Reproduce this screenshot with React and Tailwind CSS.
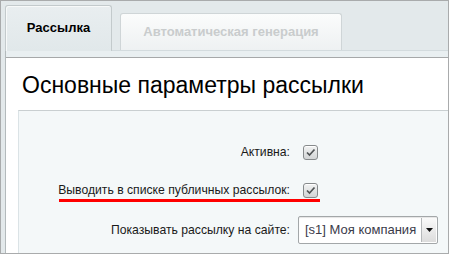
import { useState } from 'react'

function Checkbox({ checked }) {
  return (
    <span className="ml-[5px] flex h-[15px] w-[15px] items-center justify-center rounded-[3px] border border-[#868a8c] bg-gradient-to-b from-[#f2f3f3] to-[#d2d5d6] shadow-[inset_0_1px_0_#fff]">
      {checked && (
        <svg width="11" height="11" viewBox="0 0 11 11">
          <path d="M2 5.5 L4.5 8 L9.5 2.5" fill="none" stroke="#505456" strokeWidth="1.7" />
        </svg>
      )}
    </span>
  )
}

export default function App() {
  const [active, setActive] = useState(true)
  const [isPublic, setIsPublic] = useState(true)

  return (
    <div className="h-[255px] w-[450px] bg-white font-['Liberation_Sans',Arial,sans-serif]">
      <div className="flex h-[254px] w-[449px] flex-col overflow-hidden border border-[#a9abac] bg-[#e3e9eb]">
        <div className="flex h-[49px] shrink-0 items-end gap-[8px] pl-[4px]">
          <div className="relative z-10 -mb-px flex h-[46px] w-[107px] items-center justify-center rounded-t-[3px] border border-b-0 border-[#c3cacc] bg-gradient-to-b from-[#e9eef0] to-[#e1e8ea] pb-px text-[13px] font-bold text-black shadow-[inset_1px_1px_0_#f7f9f9]">
            Рассылка
          </div>
          <div className="flex h-[37px] w-[222px] items-center justify-center rounded-t-[3px] border border-b-0 border-[#cfd5d7] bg-gradient-to-b from-[#fbfcfc] to-[#eef1f2] text-[13px] font-bold text-[#c9cccd]">
            Автоматическая генерация
          </div>
        </div>

        <div className="ml-[4px] flex flex-1 flex-col border-l border-[#b3babc] bg-white">
          <div className="h-[8px] shrink-0 border-t border-b border-t-[#d3dbde] border-b-[#a6a8a9] bg-[#e9eff1]" />
          <div className="h-[52px] shrink-0 pl-[16px] pt-[14px] text-[23px] leading-[26px] text-black">
            Основные параметры рассылки
          </div>
          <div className="relative ml-[12px] flex-1 border-t border-l border-t-[#c9cfd1] border-l-[#dbe3e6] bg-[#f4f8f9] pt-[22px] text-[12.2px] text-[#1a1a1a]">
            <div className="flex h-[38px] items-center">
              <div className="w-[271px] text-right">Активна:</div>
              <button className="pl-[8px]" onClick={() => setActive(!active)}>
                <Checkbox checked={active} />
              </button>
            </div>
            <div className="relative flex h-[38px] items-center">
              <div className="w-[271px] text-right">Выводить в списке публичных рассылок:</div>
              <button className="pl-[8px]" onClick={() => setIsPublic(!isPublic)}>
                <Checkbox checked={isPublic} />
              </button>
              <div className="absolute left-[40px] top-[28px] h-[3px] w-[261px] bg-[#ff0000]" />
            </div>
            <div className="flex h-[42px] items-center">
              <div className="w-[271px] text-right">Показывать рассылку на сайте:</div>
              <div className="pl-[8px]">
                <div className="flex h-[28px] w-[140px] items-stretch rounded-[2px] border border-[#a3a7a9] bg-white shadow-[inset_0_1px_1px_#e5e5e5]">
                  <div className="flex flex-1 items-center pl-[6px] text-[13px] text-[#3b3b4a]">[s1] Моя компания</div>
                  <div className="m-[1px] flex w-[15px] items-center justify-center border-l border-[#b5b8ba] bg-gradient-to-b from-[#fafafa] to-[#dcdcdc]">
                    <svg width="7" height="4" viewBox="0 0 7 4">
                      <path d="M0 0 H7 L3.5 4 Z" fill="#111" />
                    </svg>
                  </div>
                </div>
              </div>
            </div>
          </div>
        </div>
      </div>
    </div>
  )
}
